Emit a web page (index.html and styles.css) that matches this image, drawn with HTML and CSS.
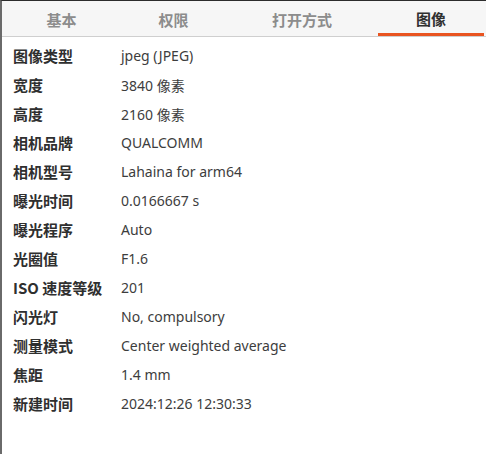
FILE: index.html
```html
<!DOCTYPE html>
<html lang="zh-CN">
<head>
<meta charset="utf-8">
<link rel="stylesheet" href="styles.css">
</head>
<body>
<div class="window">
  <div class="tabs">
    <div class="tab t1">基本</div>
    <div class="tab t2">权限</div>
    <div class="tab t3">打开方式</div>
    <div class="tab t4 active">图像</div>
  </div>
  <div class="props">
    <div class="row"><span class="k">图像类型</span><span class="v">jpeg (JPEG)</span></div>
    <div class="row"><span class="k">宽度</span><span class="v">3840 像素</span></div>
    <div class="row"><span class="k">高度</span><span class="v">2160 像素</span></div>
    <div class="row"><span class="k">相机品牌</span><span class="v">QUALCOMM</span></div>
    <div class="row"><span class="k">相机型号</span><span class="v">Lahaina for arm64</span></div>
    <div class="row"><span class="k">曝光时间</span><span class="v">0.0166667 s</span></div>
    <div class="row"><span class="k">曝光程序</span><span class="v">Auto</span></div>
    <div class="row"><span class="k">光圈值</span><span class="v">F1.6</span></div>
    <div class="row"><span class="k">ISO 速度等级</span><span class="v">201</span></div>
    <div class="row"><span class="k">闪光灯</span><span class="v">No, compulsory</span></div>
    <div class="row"><span class="k">测量模式</span><span class="v">Center weighted average</span></div>
    <div class="row"><span class="k">焦距</span><span class="v">1.4 mm</span></div>
    <div class="row"><span class="k">新建时间</span><span class="v">2024:12:26 12:30:33</span></div>
  </div>
</div>
</body>
</html>
```
FILE: styles.css
```css
html, body {
  margin: 0;
  padding: 0;
  background: #ffffff;
}
body {
  font-family: "Noto Sans", "Noto Sans CJK SC", sans-serif;
  color: #3d3d3d;
}
.window {
  width: 484px;
  height: 453px;
  border-top: 1px solid #2c2c2c;
  border-left: 2px solid #6a6a6a;
  background: #ffffff;
}
.tabs {
  display: flex;
  height: 35px;
  background: #f6f6f6;
  border-bottom: 1px solid #cfcfcf;
}
.tab {
  display: flex;
  align-items: center;
  justify-content: center;
  font-family: "Noto Sans CJK SC", sans-serif;
  font-size: 15px;
  font-weight: 700;
  color: #8c8c8c;
  box-sizing: border-box;
  padding-top: 1px;
}
.t1 { width: 119px; }
.t2 { width: 105px; }
.t3 { width: 152px; }
.t4 { width: 106px; }
.tab.active {
  color: #303030;
  border-bottom: 3px solid #e95420;
  padding-top: 3px;
}
.props {
  display: flex;
  flex-direction: column;
  padding: 4px 0 0 11px;
}
.row {
  display: flex;
  align-items: center;
  height: 29px;
}
.k {
  width: 108px;
  font-family: "Noto Sans CJK SC", sans-serif;
  font-size: 15px;
  font-weight: 700;
  color: #2f2f2f;
}
.v {
  font-family: "Noto Sans", "Noto Sans CJK SC", sans-serif;
  font-size: 14px;
  color: #3d3d3d;
}
```
